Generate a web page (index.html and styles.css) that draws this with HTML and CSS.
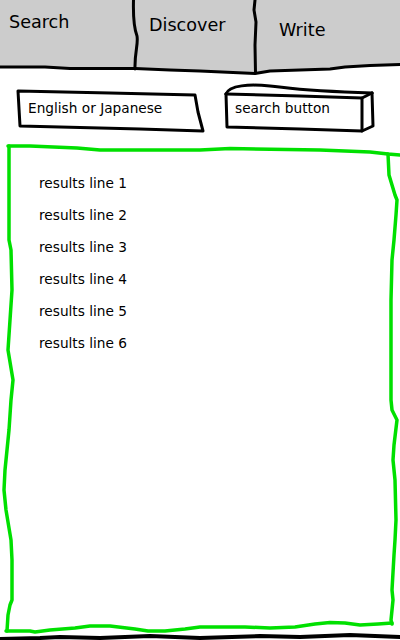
FILE: index.html
```html
<!DOCTYPE html>
<html>
<head>
<meta charset="utf-8">
<link rel="stylesheet" href="styles.css">
</head>
<body>
<div class="page">
  <header class="tabs">
    <svg class="sketch" viewBox="0 0 400 76" width="400" height="76">
      <path class="tab-fill" d="M0,0 H400 V64.5 L370,65.5 L345,67 L330,69 L270,71 L255,73 L200,71 L170,70 L135,68.5 L70,68.5 L45,67 L0,67 Z"/>
      <path class="ink" d="M0,67 L45,67 L70,68.5 L135,68.5 L170,70 L200,71 L255,73.5 L270,71 L330,69 L345,67 L370,65.5 L400,64.5"/>
      <path class="ink" d="M133.5,0 C133,18 134,28 137,36 C138.5,44 134.5,52 135,69"/>
      <path class="ink" d="M255,0 L254,10 L256,22 L255,45 L255.5,73"/>
    </svg>
    <div class="tab tab-search">Search</div>
    <div class="tab tab-discover">Discover</div>
    <div class="tab tab-write">Write</div>
  </header>

  <div class="search-row">
    <div class="field">
      <svg class="sketch" viewBox="18 91 185 38" width="185" height="38">
        <path class="ink" d="M18,91 L110,93 L195,95 L198,112 L203,131 L140,129 L60,127 L20,126 Z"/>
      </svg>
      <span class="label">English or Japanese</span>
    </div>
    <div class="button">
      <svg class="sketch" viewBox="225 88 147 40" width="147" height="40">
        <path class="ink" d="M226,94 C229,85 250,84 270,86 C290,88 300,91 372,93"/>
        <path class="ink" d="M226,94 L300,96 L362,98 L372,93"/>
        <path class="ink" d="M226,94 L227,127 L300,129 L362,131 L362,98"/>
        <path class="ink" d="M372,93 L373,126 L362,131"/>
      </svg>
      <span class="label">search button</span>
    </div>
  </div>

  <section class="results">
    <svg class="sketch" viewBox="8 146 384 485" width="384" height="485">
      <path class="green" d="M8,146 L30,146 L77,148 L100,150 L200,150 L230,148.5 L320,150 L370,152 L388,154 L400,155"/>
      <path class="green" d="M388,154 L389,175 L395,195 L397,200 L396,215 L394,240 L392,260 L391,300 L391,400 L392,410 L397,420 L394,445 L393,460 L395,480 L396,520 L395,540 L394,555 L392,590 L393,600 L391,620 L392,624"/>
      <path class="green" d="M6,631 L30,631 L35,632 L50,630 L75,628 L90,626 L110,626 L135,629 L148,631 L165,631 L185,629 L200,627 L245,627 L270,628 L295,627 L315,624 L330,622.5 L345,623 L360,625 L378,624 L392,623"/>
      <path class="green" d="M9,146 L9,240 L11,250 L12,290 L10,320 L8,350 L13,380 L11,400 L9,430 L5,470 L4,490 L6,510 L11,540 L12,560 L12,600 L10,605 L8,615 L7,631"/>
      <path class="ink ink-bottom" d="M0,639 L40,638 L60,637 L100,638 L150,636 L200,638 L260,636 L300,637 L350,635 L400,637"/>
    </svg>
    <ul class="result-list">
      <li>results line 1</li>
      <li>results line 2</li>
      <li>results line 3</li>
      <li>results line 4</li>
      <li>results line 5</li>
      <li>results line 6</li>
    </ul>
  </section>
</div>
</body>
</html>
```

FILE: styles.css
```css
html, body {
  margin: 0;
  padding: 0;
  background: #fff;
}

body {
  font-family: "DejaVu Sans", "Liberation Sans", sans-serif;
  color: #000;
}

.page {
  width: 400px;
  height: 640px;
  overflow: hidden;
}

.sketch {
  position: absolute;
  top: 0;
  left: 0;
  overflow: visible;
}

.ink {
  fill: none;
  stroke: #000;
  stroke-width: 3;
  stroke-linejoin: round;
  stroke-linecap: round;
}

.ink-bottom {
  stroke-width: 4;
}

.green {
  fill: none;
  stroke: #00e000;
  stroke-width: 3.5;
  stroke-linejoin: round;
  stroke-linecap: round;
}

.tab-fill {
  fill: #cccccc;
  stroke: none;
}

/* Tabs */
.tabs {
  position: relative;
  display: flex;
  height: 70px;
}

.tab {
  position: relative;
  font-size: 17.6px;
  line-height: 21px;
  box-sizing: border-box;
}

.tab-search {
  width: 135px;
  padding: 12px 0 0 9px;
}

.tab-discover {
  width: 120px;
  padding: 15px 0 0 14px;
}

.tab-write {
  flex: 1;
  padding: 20px 0 0 24px;
}

/* Search row */
.search-row {
  display: flex;
  height: 76px;
  font-size: 13.7px;
  line-height: 16px;
}

.field {
  position: relative;
  width: 185px;
  height: 38px;
  margin: 21px 0 0 18px;
  box-sizing: border-box;
  padding: 9px 0 0 10px;
}

.button {
  position: relative;
  width: 147px;
  height: 40px;
  margin: 18px 0 0 22px;
  box-sizing: border-box;
  padding: 12px 0 0 10px;
}

.label {
  position: relative;
}

/* Results */
.results {
  position: relative;
  width: 384px;
  height: 485px;
  margin-left: 8px;
  box-sizing: border-box;
  padding: 21px 0 0 31px;
}

.result-list {
  position: relative;
  list-style: none;
  margin: 0;
  padding: 0;
  font-size: 13.7px;
  line-height: 32px;
}
```
